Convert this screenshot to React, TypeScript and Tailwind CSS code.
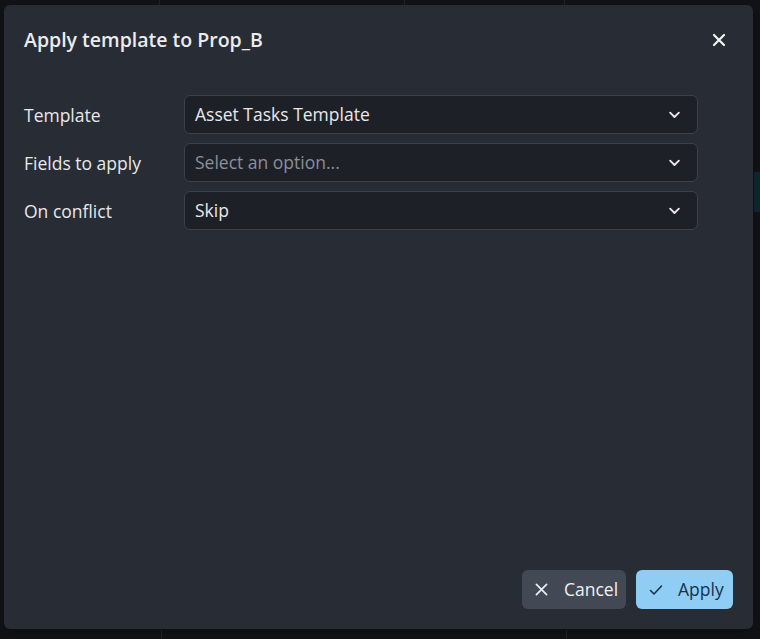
import React from "react";

const font = { fontFamily: '"Open Sans", "Noto Sans", "Liberation Sans", sans-serif' };

function Chevron() {
  return (
    <svg width="15" height="15" viewBox="0 0 24 24" fill="none" stroke="#e5e7eb" strokeWidth="3" strokeLinecap="round" strokeLinejoin="round">
      <path d="M5 9l7 7 7-7" />
    </svg>
  );
}

function SelectBox({ value, placeholder }: { value?: string; placeholder?: string }) {
  return (
    <div className="flex h-[39px] w-[514px] items-center justify-between rounded-md border border-[#3d414b] bg-[#1e2028] pl-[10px] pr-[15px]">
      <span className={value ? "text-[17.5px] font-medium text-[#e8e8ea]" : "text-[17.5px] font-medium text-[#8b8f98]"}>
        {value ?? placeholder}
      </span>
      <Chevron />
    </div>
  );
}

function Row({ label, children }: { label: string; children: React.ReactNode }) {
  return (
    <div className="flex items-center">
      <div className="w-[160px] pt-[1px] text-[17.5px] font-medium text-[#e8e8ea]">{label}</div>
      {children}
    </div>
  );
}

export default function App() {
  return (
    <div className="relative h-[639px] w-[760px] overflow-hidden bg-[#101216]" style={font}>
      {/* app behind the modal */}
      <div className="absolute left-0 top-0 flex h-[6px] w-full">
        <div className="w-[160px] border-r border-[#1d2026]" />
        <div className="w-[245px] border-r border-[#1d2026]" />
        <div className="w-[160px] border-r border-[#1d2026]" />
      </div>
      <div className="absolute left-0 top-[630px] flex h-[9px] w-full">
        <div className="w-[162px] border-r border-[#22252b]" />
        <div className="w-[405px] border-r border-[#22252b]" />
      </div>
      <div className="absolute right-0 top-[172px] h-[40px] w-[6px] bg-[#0f2630]" />

      {/* modal */}
      <div className="absolute left-[4px] top-[5px] flex h-[624px] w-[749px] flex-col rounded-md bg-[#272c35] shadow-lg">
        <div className="flex h-[70px] items-center justify-between px-5">
          <h2 className="text-[19.5px] font-semibold text-[#ebebed]">Apply template to Prop_B</h2>
          <button className="mr-[2px] flex h-6 w-6 items-center justify-center">
            <svg width="14" height="14" viewBox="0 0 14 14" fill="none" stroke="#f3f4f6" strokeWidth="2.2" strokeLinecap="round">
              <path d="M2 2l10 10M12 2L2 12" />
            </svg>
          </button>
        </div>

        <div className="flex flex-1 flex-col gap-[9px] px-5 pt-[20px]">
          <Row label="Template">
            <SelectBox value="Asset Tasks Template" />
          </Row>
          <Row label="Fields to apply">
            <SelectBox placeholder="Select an option..." />
          </Row>
          <Row label="On conflict">
            <SelectBox value="Skip" />
          </Row>
        </div>

        <div className="flex justify-end gap-[10px] px-5 pb-5">
          <button className="flex h-[39px] w-[104px] items-center gap-[16px] rounded-md bg-[#434954] pl-[13px] text-[17.5px] font-medium text-[#eef0f2]">
            <svg width="13" height="13" viewBox="0 0 14 14" fill="none" stroke="#eef0f2" strokeWidth="1.8" strokeLinecap="round">
              <path d="M1.5 1.5l11 11M12.5 1.5l-11 11" />
            </svg>
            Cancel
          </button>
          <button className="flex h-[39px] w-[97px] items-center gap-[15px] rounded-md bg-[#90cdf4] pl-[13px] text-[17.5px] font-medium text-[#153349]">
            <svg width="14" height="14" viewBox="0 0 14 14" fill="none" stroke="#153349" strokeWidth="1.6" strokeLinecap="round" strokeLinejoin="round">
              <path d="M1.5 7.5l3.5 3.5 7.5-8" />
            </svg>
            Apply
          </button>
        </div>
      </div>
    </div>
  );
}
